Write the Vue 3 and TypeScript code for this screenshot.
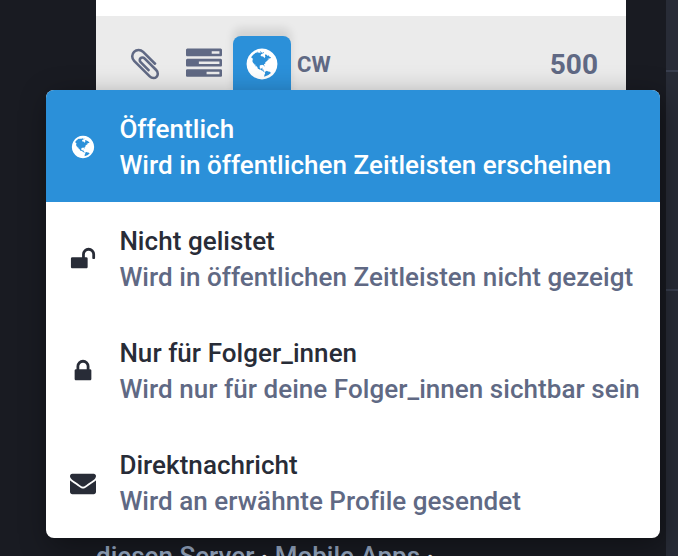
<script setup lang="ts">
interface Privacy {
  icon: string
  title: string
  text: string
}

const icons: Record<string, string> = {
  globe:
    'M896 128q209 0 385.5 103t279.5 279.5 103 385.5-103 385.5-279.5 279.5-385.5 103-385.5-103-279.5-279.5-103-385.5 103-385.5 279.5-279.5 385.5-103zm274 521q-2 1-9.5 9.5t-13.5 9.5q2 0 4.5-5t5-11 3.5-7q6-7 22-15 14-6 52-12 34-8 51 11-2-2 9.5-13t14.5-12q3-2 15-4.5t15-7.5l2-22q-12 1-17.5-7t-6.5-21q0 2-6 8 0-7-4.5-8t-11.5 1-9 1q-10-3-15-7.5t-8-16.5-4-15q-2-5-9.5-11t-9.5-10q-1-2-2.5-5.5t-3-6.5-4-5.5-5.5-2.5-7 5-7.5 10-4.5 5q-3-2-6-1.5t-4.5 1-4.5 3-5 3.5q-3 2-8.5 3t-8.5 2q15-5-1-11-10-4-16-3 9-4 7.5-12t-8.5-14h5q-1-4-8.5-8.5t-17.5-8.5-13-6q-8-5-34-9.5t-33-.5q-5 6-4.5 10.5t4 14 3.5 12.5q1 6-5.5 13t-6.5 12q0 7 14 15.5t10 21.5q-3 8-16 16t-16 12q-5 8-1.5 18.5t10.5 16.5q2 2 1.5 4t-3.5 4.5-5.5 4-6.5 3.5l-3 2q-11 5-20.5-6t-13.5-26q-7-25-16-30-23-8-29 1-5-13-41-26-25-9-58-4 6-1 0-15-7-15-19-12 3-6 4-17.5t1-13.5q3-13 12-23 1-1 7-8.5t9.5-13.5.5-6q35 4 50-11 5-5 11.5-17t10.5-17q9-6 14-5.5t14.5 5.5 14.5 5q14 1 15.5-11t-7.5-20q12 1 3-17-4-7-8-9-12-4-27 5-8 4 2 8-1-1-9.5 10.5t-16.5 17.5-16-5q-1-1-5.5-13.5t-9.5-13.5q-8 0-16 15 3-8-11-15t-24-8q19-12-8-27-7-4-20.5-5t-19.5 4q-5 7-5.5 11.5t5 8 10.5 5.5 11.5 4 8.5 3q14 10 8 14-2 1-8.5 3.5t-11.5 4.5-6 4q-3 4 0 14t-2 14q-5-5-9-17.5t-7-16.5q7 9-25 6l-10-1q-4 0-16 2t-20.5 1-13.5-8q-4-8 0-20 1-4 4-2-4-3-11-9.5t-10-8.5q-46 15-94 41 6 1 12-1 5-2 13-6.5t10-5.5q34-14 42-7l5-5q14 16 20 25-7-4-30-1-20 6-22 12 7 12 5 18-4-3-11.5-10t-14.5-11-15-5q-16 0-22 1-146 80-235 222 7 7 12 8 4 1 5 9t2.5 11 11.5-3q9 8 3 19 1-1 44 27 19 17 21 21 3 11-10 18-1-2-9-9t-9-4q-3 5 .5 18.5t10.5 12.5q-7 0-9.5 16t-2.5 35.5-1 23.5l2 1q-3 12 5.5 34.5t21.5 19.5q-13 3 20 43 6 8 8 9 3 2 12 7.5t15 10 10 10.5q4 5 10 22.5t14 23.5q-2 6 9.5 20t10.5 23q-1 0-2.5 1t-2.5 1q3 7 15.5 14t15.5 13q1 3 2 10t3 11 8 2q2-20-24-62-15-25-17-29-3-5-5.5-15.5t-4.5-14.5q2 0 6 1.5t8.5 3.5 7.5 4 2 3q-3 7 2 17.5t12 18.5 17 19 12 13q6 6 14 19.5t0 13.5q9 0 20 10.5t17 19.5q5 8 8 26t5 24q2 7 8.5 13.5t12.5 9.5l16 8 13 7q5 2 18.5 10.5t21.5 11.5q10 4 16 4t14.5-2.5 13.5-3.5q15-2 29 15t21 21q36 19 55 11-2 1 .5 7.5t8 15.5 9 14.5 5.5 8.5q5 6 18 15t18 15q6-4 7-9-3 8 7 20t18 10q14-3 14-32-31 15-49-18 0-1-2.5-5.5t-4-8.5-2.5-8.5 0-7.5 5-3q9 0 10-3.5t-2-12.5-4-13q-1-8-11-20t-12-15q-5 9-16 8t-16-9q0 1-1.5 5.5t-1.5 6.5q-13 0-15-1 1-3 2.5-17.5t3.5-22.5q1-4 5.5-12t7.5-14.5 4-12.5-4.5-9.5-17.5-2.5q-19 1-26 20-1 3-3 10.5t-5 11.5-9 7q-7 3-24 2t-24-5q-13-8-22.5-29t-9.5-37q0-10 2.5-26.5t3-25-5.5-24.5q3-2 9-9.5t10-10.5q2-1 4.5-1.5t4.5 0 4-1.5 3-6q-1-1-4-3-3-3-4-3 7 3 28.5-1.5t27.5 1.5q15 11 22-2 0-1-2.5-9.5t-.5-13.5q5 27 29 9 3 3 15.5 5t17.5 5q3 2 7 5.5t5.5 4.5 5-.5 8.5-6.5q10 14 12 24 11 40 19 44 7 3 11 2t4.5-9.5 0-14-1.5-12.5l-1-8v-18l-1-8q-15-3-18.5-12t1.5-18.5 15-18.5q1-1 8-3.5t15.5-6.5 12.5-8q21-19 15-35 7 0 11-9-1 0-5-3t-7.5-5-4.5-2q9-5 2-16 5-3 7.5-11t7.5-10q9 12 21 2 7-8 1-16 5-7 20.5-10.5t18.5-9.5q7 2 8-2t1-12 3-12q4-5 15-9t13-5l17-11q3-4 0-4 18 2 31-11 10-11-6-20 3-6-3-9.5t-15-5.5q3-1 11.5-.5t10.5-1.5q15-10-7-16-17-5-43 12zm-163 877q206-36 351-189-3-3-12.5-4.5t-12.5-3.5q-18-7-24-8 1-7-2.5-13t-8-9-12.5-8-11-7q-2-2-7-6t-7-5.5-7.5-4.5-8.5-2-10 1l-3 1q-3 1-5.5 2.5t-5.5 3-4 3 0 2.5q-21-17-36-22-5-1-11-5.5t-10.5-7-10-1.5-11.5 7q-5 5-6 15t-2 13q-7-5 0-17.5t2-18.5q-3-6-10.5-4.5t-12 4.5-11.5 8.5-9 6.5-8.5 5.5-8.5 7.5q-3 4-6 12t-5 11q-2-4-11.5-6.5t-9.5-5.5q2 10 4 35t5 38q7 31-12 48-27 25-29 40-4 22 12 26 0 7-8 20.5t-7 21.5q0 6 2 16z',
  paperclip:
    'M1596 1385q0 117-79 196t-196 79q-135 0-235-100l-777-776q-113-115-113-271 0-159 110-270t269-111q158 0 273 113l605 606q10 10 10 22 0 16-30.5 46.5t-46.5 30.5q-13 0-23-10l-606-607q-79-77-181-77-106 0-179 75t-73 181q0 105 76 181l776 777q63 63 145 63 64 0 106-42t42-106q0-82-63-145l-581-581q-26-24-60-24-29 0-48 19t-19 48q0 32 25 59l410 410q10 10 10 22 0 16-31 47t-47 31q-12 0-22-10l-410-410q-63-61-63-149 0-82 57-139t139-57q88 0 149 63l581 581q100 98 100 235z',
  tasks:
    'M1024 1408h640v-128h-640v128zm-384-512h1024v-128h-1024v128zm640-512h384v-128h-384v128zm512 832v256q0 26-19 45t-45 19h-1664q-26 0-45-19t-19-45v-256q0-26 19-45t45-19h1664q26 0 45 19t19 45zm0-512v256q0 26-19 45t-45 19h-1664q-26 0-45-19t-19-45v-256q0-26 19-45t45-19h1664q26 0 45 19t19 45zm0-512v256q0 26-19 45t-45 19h-1664q-26 0-45-19t-19-45v-256q0-26 19-45t45-19h1664q26 0 45 19t19 45z',
  unlock:
    'M1728 576v256q0 26-19 45t-45 19h-64q-26 0-45-19t-19-45v-256q0-106-75-181t-181-75-181 75-75 181v192h96q40 0 68 28t28 68v576q0 40-28 68t-68 28h-960q-40 0-68-28t-28-68v-576q0-40 28-68t68-28h672v-192q0-185 131.5-316.5t316.5-131.5 316.5 131.5 131.5 316.5z',
  lock:
    'M640 768h512v-192q0-106-75-181t-181-75-181 75-75 181v192zm832 96v576q0 40-28 68t-68 28h-960q-40 0-68-28t-28-68v-576q0-40 28-68t68-28h32v-192q0-184 132-316t316-132 316 132 132 316v192h32q40 0 68 28t28 68z',
  envelope:
    'M1792 710v794q0 66-47 113t-113 47h-1472q-66 0-113-47t-47-113v-794q44 49 101 87 362 246 497 345 57 42 92.5 65.5t94.5 48 110 24.5h2q51 0 110-24.5t94.5-48 92.5-65.5q170-123 498-345 57-39 100-87zm0-294q0 79-49 151t-122 123q-376 261-468 325-10 7-42.5 31t-54 38.5-52 32.5-57.5 27-50 9h-2q-23 0-50-9t-57.5-27-52-32.5-54-38.5-42.5-31q-91-64-262-182.5t-205-142.5q-62-42-117-115.5t-55-136.5q0-78 41.5-130t118.5-52h1472q65 0 112.5 47t47.5 113z',
}

const options: Privacy[] = [
  { icon: 'globe', title: 'Öffentlich', text: 'Wird in öffentlichen Zeitleisten erscheinen' },
  { icon: 'unlock', title: 'Nicht gelistet', text: 'Wird in öffentlichen Zeitleisten nicht gezeigt' },
  { icon: 'lock', title: 'Nur für Folger_innen', text: 'Wird nur für deine Folger_innen sichtbar sein' },
  { icon: 'envelope', title: 'Direktnachricht', text: 'Wird an erwähnte Profile gesendet' },
]
const selected = 0
</script>

<template>
  <div class="page">
    <main class="drawer">
      <div class="textarea"></div>
      <div class="toolbar">
        <button class="tool clip"><svg viewBox="0 0 1792 1792"><path :d="icons.paperclip" /></svg></button>
        <button class="tool poll"><svg viewBox="0 0 1792 1792"><path :d="icons.tasks" /></svg></button>
        <button class="tool active"><svg viewBox="0 0 1792 1792"><path :d="icons.globe" /></svg></button>
        <button class="tool cw">CW</button>
        <span class="counter">500</span>
      </div>
      <footer class="links"><a>diesen Server</a> · <a>Mobile Apps</a> ·</footer>
    </main>
    <aside class="column">
      <div class="row first"></div>
      <div class="row"></div>
    </aside>
    <div class="dropdown">
      <div v-for="(o, i) in options" :key="o.icon" class="option" :class="{ selected: i === selected }">
        <div class="option-icon">
          <svg viewBox="0 0 1792 1792"><path :d="icons[o.icon]" /></svg>
        </div>
        <div class="option-content">
          <strong>{{ o.title }}</strong>
          <span>{{ o.text }}</span>
        </div>
      </div>
    </div>
  </div>
</template>

<style>
body {
  margin: 0;
  background: #191b22;
}
</style>

<style scoped>
.page {
  position: relative;
  display: flex;
  justify-content: space-between;
  width: 678px;
  height: 556px;
  overflow: hidden;
  box-sizing: border-box;
  padding-left: 96px;
  background: #191b22;
  font-family: Roboto, 'Liberation Sans', sans-serif;
  font-size: 26px;
  line-height: 36px;
}
svg {
  display: block;
  fill: currentColor;
}
.drawer {
  display: flex;
  flex-direction: column;
  width: 530px;
}
.textarea {
  flex: none;
  height: 16px;
  background: #fff;
}
.toolbar {
  display: flex;
  flex: none;
  align-items: flex-start;
  height: 84px;
  box-sizing: border-box;
  padding: 20px 28px 0 20px;
  background: #ebebeb;
  color: #606984;
}
.tool {
  display: flex;
  align-items: center;
  justify-content: center;
  width: 58px;
  height: 56px;
  padding: 0;
  border: 0;
  background: none;
  color: inherit;
  font: inherit;
}
.tool svg {
  width: 36px;
  height: 36px;
}
.clip {
  margin-right: 0.5px;
}
.poll {
  margin-right: 0.5px;
}
.active {
  height: 64px;
  padding-bottom: 8px;
  border-radius: 8px 8px 0 0;
  background: #2b90d9;
  color: #fff;
  box-shadow: 0 -8px 8px rgba(0, 0, 0, 0.1);
}
.cw {
  width: auto;
  padding: 2px 0 0 6px;
  font-size: 22px;
  font-weight: 700;
}
.counter {
  margin-left: auto;
  font-size: 28px;
  font-weight: 700;
  line-height: 58px;
}
.links {
  margin-top: 438px;
  color: #fff;
  font-weight: 500;
  white-space: nowrap;
}
.links a {
  color: #98aac4;
}
.column {
  width: 12px;
  background: #282c37;
}
.row {
  height: 217px;
  border-bottom: 2px solid #393f4f;
}
.first {
  height: 70px;
}
.dropdown {
  position: absolute;
  left: 46px;
  top: 90px;
  width: 614px;
  height: 448px;
  overflow: hidden;
  border-radius: 8px;
  background: #fff;
  box-shadow: 4px 8px 30px rgba(0, 0, 0, 0.4);
}
.option {
  display: flex;
  align-items: center;
  height: 112px;
  box-sizing: border-box;
  padding: 20px;
  color: #282c37;
}
.option-icon {
  display: flex;
  justify-content: center;
  width: 33.2px;
  margin-right: 20.2px;
  padding-top: 1px;
}
.option-icon svg {
  width: 26px;
  height: 26px;
}
.option-content {
  padding-top: 2px;
  white-space: nowrap;
  color: #606984;
  font-weight: 500;
  letter-spacing: 0.05px;
}
.option-content strong,
.option-content span {
  display: block;
}
.option-content strong {
  color: #282c37;
  font-weight: 500;
}
.selected {
  background: #2b90d9;
}
.selected,
.selected .option-content,
.selected strong {
  color: #fff;
}
</style>
